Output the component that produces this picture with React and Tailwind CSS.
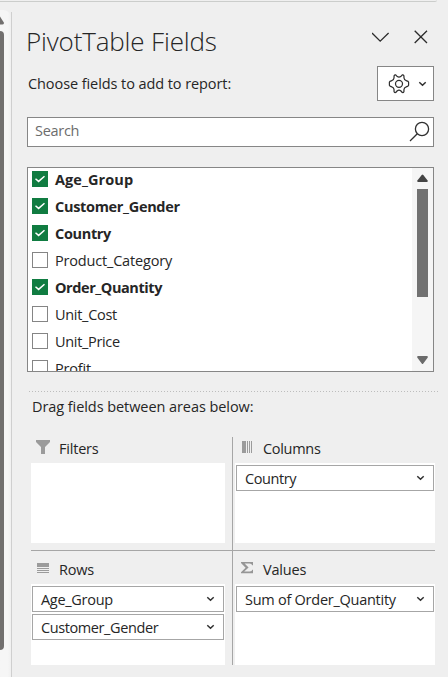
import React from 'react';

const FIELDS = [
  { name: 'Age_Group', checked: true, tracking: 'tracking-[0.08px]' },
  { name: 'Customer_Gender', checked: true, tracking: 'tracking-[-0.32px]' },
  { name: 'Country', checked: true, tracking: 'tracking-[-0.35px]' },
  { name: 'Product_Category', checked: false, tracking: 'tracking-[-0.18px]' },
  { name: 'Order_Quantity', checked: true, tracking: 'tracking-[-0.43px]' },
  { name: 'Unit_Cost', checked: false, tracking: 'tracking-[-0.3px]' },
  { name: 'Unit_Price', checked: false, tracking: 'tracking-[-0.33px]' },
  { name: 'Profit', checked: false, tracking: 'tracking-[-0.2px]' },
];

function SmallChevron() {
  return (
    <svg width="9" height="6" viewBox="0 0 9 6" className="block shrink-0" fill="none" stroke="#303030" strokeWidth="1.5">
      <path d="M1.3 1.3 4.5 4.2 7.7 1.3" />
    </svg>
  );
}

function Checkbox({ checked }) {
  if (!checked) return <span className="size-4 shrink-0 border border-[#858585] bg-white" />;
  return (
    <span className="flex size-4 shrink-0 items-center justify-center bg-[#107c41]">
      <svg width="16" height="16" viewBox="0 0 16 16" fill="none" stroke="#fff" strokeWidth="1.5">
        <path d="M3.5 7.7 6.6 10.4 12.5 5.2" />
      </svg>
    </span>
  );
}

function Item({ label, tracking }) {
  return (
    <div className="flex h-[26px] items-center justify-between border border-[#a6a6a6] bg-white pr-2 pl-2">
      <span className={'pt-px leading-5 whitespace-nowrap ' + tracking}>{label}</span>
      <SmallChevron />
    </div>
  );
}

function Area({ icon, title, items = [], className, headClass, boxClass, tracking }) {
  return (
    <section className={className}>
      <div className={'flex items-center ' + headClass}>
        {icon}
        <span className={'leading-5 ' + tracking}>{title}</span>
      </div>
      <div className={'flex flex-col gap-0.5 bg-white px-px pt-0.5 ' + boxClass}>
        {items.map((i) => <Item key={i.label} {...i} />)}
      </div>
    </section>
  );
}

const FunnelIcon = (
  <svg width="28" height="20" viewBox="0 0 28 20" className="shrink-0" fill="#9b9b9b">
    <path d="M5 0H19V2L14 7V14H10V7L5 2Z" />
  </svg>
);
const ColumnsIcon = (
  <svg width="28" height="20" viewBox="0 0 28 20" className="shrink-0" fill="#9b9b9b" shapeRendering="crispEdges">
    <path d="M7 1h4v12H7zM12 1h1v12h-1zM14 1h1v12h-1zM16 1h1v12h-1z" />
  </svg>
);
const RowsIcon = (
  <svg width="28" height="20" viewBox="0 0 28 20" className="shrink-0" fill="#9b9b9b" shapeRendering="crispEdges">
    <path d="M6 3h12v4H6zM6 8h12v1H6zM6 10h12v1H6zM6 12h12v1H6z" />
  </svg>
);
const SigmaIcon = (
  <svg width="28" height="20" viewBox="0 0 28 20" className="shrink-0" fill="#969696">
    <path d="M6 2H18V5.2H17.2Q16.8 3.4 14.5 3.4H9.6L13.6 7.4 9.2 11.4H14.8Q17 11.4 17.3 9.8H18V13.2H6V12.2L10.6 7.7 6 3Z" />
  </svg>
);

export default function App() {
  return (
    <div className="flex h-[677px] w-[448px] flex-col overflow-hidden bg-[#efefef] font-['Open_Sans','Noto_Sans',sans-serif] text-[14.5px] text-[#262626]">
      <div className="h-0.5 w-[437px] shrink-0 rounded-br-[4px] border-b border-[#cbcdcb]" />
      <div className="flex min-h-0 flex-1">
        <aside className="flex w-[11px] shrink-0 flex-col pt-2">
          <div className="flex flex-1 flex-col rounded-tr-lg bg-gradient-to-r from-[#f6f6f6] from-70% to-[#f0f0f0]">
            <svg width="5" height="21" viewBox="0 0 5 21" className="block shrink-0">
              <path d="M0 6.5 3.8 12.5Q4.5 14.5 2.5 14.5H0Z" fill="#72706f" />
            </svg>
            <div className="h-[619px] w-1 shrink-0 rounded-r bg-[#72706f]" />
          </div>
        </aside>
        <main className="mt-[10px] flex min-w-0 flex-1 flex-col border-l border-[#cfcfcf]">
          <header className="flex h-[54px] shrink-0 items-center pt-[5px] pl-[14px]">
            <h1 className="-mt-0.5 w-[346px] text-[26px] leading-9 font-light tracking-[-0.16px] whitespace-nowrap">PivotTable Fields</h1>
            <svg width="60" height="20" viewBox="0 0 60 20" className="-mt-[7px] block shrink-0" fill="none" stroke="#2b2b2b" strokeWidth="1.3">
              <path d="M0 5 8.2 13.2 16.6 5M42.7 2.7 55 15M55 2.7 42.7 15" />
            </svg>
          </header>
          <div className="flex h-[35px] w-[422px] shrink-0 items-center justify-between pl-4">
            <span className="whitespace-nowrap tracking-[-0.08px]">Choose fields to add to report:</span>
            <button className="flex h-[35px] w-[57px] items-center justify-between border border-[#868686] bg-white pr-1.5 pl-[10px]">
              <svg width="22" height="22" viewBox="0 0 22 22" fill="none" stroke="#303030" strokeWidth="1.25" strokeLinejoin="round">
                <path d="M6.1 2.7 Q6.7 1.6 7.7 1.9 L9.3 3.6 Q11 4.8 12.7 3.6 L14.3 1.9 Q15.3 1.6 15.9 2.7 L16 5 Q16.2 7 18.2 7.6 L20 8.3 Q20.9 9 20.6 10.8 Q20.9 12.4 20 13.1 L18.2 13.8 Q16.2 14.4 16 16.4 L15.9 18.7 Q15.3 19.9 14.3 19.5 L12.7 17.8 Q11 16.6 9.3 17.8 L7.7 19.5 Q6.7 19.9 6.1 18.7 L6 16.4 Q5.8 14.4 3.8 13.8 L2 13.1 Q1.1 12.4 1.4 10.8 Q1.1 9 2 8.3 L3.8 7.6 Q5.8 7 6 5Z" />
                <circle cx="11" cy="10.8" r="3.5" />
              </svg>
              <SmallChevron />
            </button>
          </div>
          <div className="mt-4 ml-[15px] flex h-[30px] w-[407px] shrink-0 items-center justify-between border border-[#868686] bg-white pr-[3px] pl-[7px]">
            <span className="-mt-0.5 tracking-[-0.3px] text-[#6c6c6c]">Search</span>
            <svg width="21" height="22" viewBox="0 0 21 22" fill="none" stroke="#303030" strokeWidth="1.3">
              <circle cx="13" cy="8" r="6.6" />
              <path d="M8.3 12.8 1 20" />
            </svg>
          </div>
          <div className="mt-5 ml-[15px] flex h-[205px] w-[407px] shrink-0 overflow-hidden border border-[#868686] bg-white">
            <ul className="flex flex-1 flex-col gap-[11px] pt-[3px] pl-1">
              {FIELDS.map((f) => (
                <li key={f.name} className="flex h-4 shrink-0 items-center gap-[7px]">
                  <Checkbox checked={f.checked} />
                  <span className={'pt-0.5 leading-4 ' + (f.checked ? 'font-bold ' : '') + f.tracking}>{f.name}</span>
                </li>
              ))}
            </ul>
            <div className="flex w-[21px] flex-col items-center bg-[#f5f5f5]">
              <svg width="11" height="21" viewBox="0 0 11 21" className="block shrink-0" fill="#444">
                <path d="M4.7 7Q5.5 6 6.3 7L10.6 12.4Q11 14 10 14H1Q0 14 .4 12.4Z" />
              </svg>
              <div className="h-[108px] w-[11px] bg-[#717171]" />
              <svg width="11" height="10" viewBox="0 0 11 10" className="mt-[58px] block shrink-0" fill="#6b6b6b">
                <path d="M1 1H10Q11 1 10.8 2.4L6.3 8.5Q5.5 9.6 4.7 8.5L.2 2.4Q0 1 1 1Z" />
              </svg>
            </div>
          </div>
          <div className="mt-[19px] ml-[17px] h-px w-[409px] shrink-0 bg-[repeating-linear-gradient(90deg,#bdbdbd_0_1px,transparent_1px_3px)]" />
          <p className="ml-5 h-[45px] shrink-0 pt-[5px] leading-5 tracking-[-0.07px]">Drag fields between areas below:</p>
          <div className="ml-[19px] grid w-[404px] shrink-0 grid-cols-[201px_203px] grid-rows-[114px_114px]">
            <Area icon={FunnelIcon} title="Filters" tracking="-mt-[3px] tracking-[-0.2px]" className="border-b border-[#a6a6a6]" headClass="h-[26px]" boxClass="h-20 w-[194px]" />
            <Area icon={ColumnsIcon} title="Columns" tracking="-mt-[3px] tracking-[-0.3px]" className="border-b border-l border-[#a6a6a6]" headClass="h-[26px] pl-0.5" boxClass="ml-0.5 h-20 w-[200px]" items={[{ label: 'Country', tracking: 'tracking-[-0.4px]' }]} />
            <Area icon={RowsIcon} title="Rows" tracking="tracking-[-0.2px]" className="" headClass="h-[33px] pt-[5px]" boxClass="h-[81px] w-[194px]" items={[{ label: 'Age_Group', tracking: 'tracking-[-0.3px]' }, { label: 'Customer_Gender', tracking: 'tracking-[-0.4px]' }]} />
            <Area icon={SigmaIcon} title="Values" tracking="tracking-[-0.2px]" className="border-l border-[#a6a6a6]" headClass="h-[33px] pt-[5px] pl-0.5" boxClass="ml-0.5 h-[81px] w-[200px]" items={[{ label: 'Sum of Order_Quantity', tracking: 'tracking-[-0.26px]' }]} />
          </div>
        </main>
      </div>
    </div>
  );
}
